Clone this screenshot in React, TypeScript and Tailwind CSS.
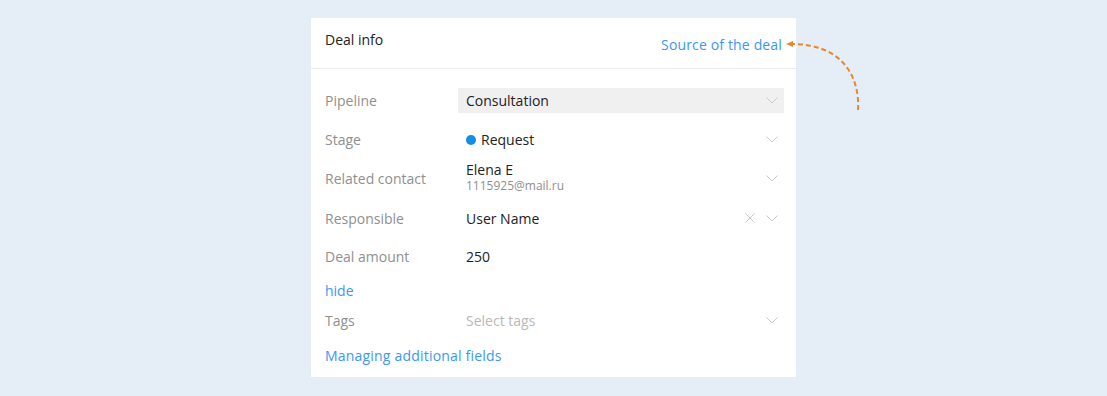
// ── Campos do negócio ──
const Chevron = () => (
  <svg width="12" height="7" viewBox="0 0 12 7" className="shrink-0">
    <path d="M0.5 0.5 L6 6 L11.5 0.5" fill="none" stroke="#c8c8c8" strokeWidth="1" />
  </svg>
)

const Cross = () => (
  <svg width="10" height="10" viewBox="0 0 10 10" className="shrink-0">
    <path d="M0.5 0.5 L9.5 9.5 M9.5 0.5 L0.5 9.5" fill="none" stroke="#c8c8c8" strokeWidth="1" />
  </svg>
)

function Row({ label, children, right, h = 'h-[39px]' }: { label: string; children: React.ReactNode; right?: React.ReactNode; h?: string }) {
  return (
    <div className={`flex items-center ${h}`}>
      <span className="w-[141px] shrink-0 text-[#8f8f8f]">{label}</span>
      <div className="flex-1 flex items-center justify-between pr-[6px]">
        <div>{children}</div>
        {right}
      </div>
    </div>
  )
}

export default function App() {
  return (
    <div
      className="relative w-[1107px] h-[396px] bg-[#e5edf6] text-[14px] text-[#222]"
      style={{ fontFamily: '"Open Sans", "Noto Sans", sans-serif' }}
    >
      <div className="absolute left-[311px] top-[18px] w-[485px] h-[359px] bg-white">
        {/* Cabeçalho */}
        <div className="h-[51px] border-b border-[#ececec] flex justify-between px-[14px]">
          <span className="pt-[11px]">Deal info</span>
          <span className="pt-[16px] text-[#3b97f5] tracking-[0.15px]">Source of the deal</span>
        </div>

        <div className="pl-[14px] pr-[12px] pt-[12px]">
          {/* Pipeline */}
          <div className="flex items-center h-[39px]">
            <span className="w-[133px] shrink-0 text-[#8f8f8f]">Pipeline</span>
            <div className="flex-1 h-[25px] bg-[#f0f0f0] flex items-center justify-between pl-[8px] pr-[6px]">
              <span>Consultation</span>
              <Chevron />
            </div>
          </div>

          <Row label="Stage" right={<Chevron />}>
            <span className="flex items-center gap-[5px]">
              <span className="w-[10px] h-[10px] rounded-full bg-[#138de6]" />
              Request
            </span>
          </Row>

          <Row label="Related contact" right={<Chevron />}>
            <div className="flex flex-col leading-[16px] -mt-[1px]">
              <span>Elena E</span>
              <span className="text-[12px] text-[#8f8f8f]">1115925@mail.ru</span>
            </div>
          </Row>

          <Row
            label="Responsible"
            h="h-[40px]"
            right={
              <span className="flex items-center gap-[11px]">
                <Cross />
                <Chevron />
              </span>
            }
          >
            <span>User Name</span>
          </Row>

          <div className="flex items-center h-[37px]">
            <span className="w-[141px] shrink-0 text-[#8f8f8f]">Deal amount</span>
            <span>250</span>
          </div>

          <div className="h-[30px] flex items-center text-[#3b97f5]">hide</div>

          <Row label="Tags" h="h-[30px]" right={<Chevron />}>
            <span className="text-[#b8b8b8]">Select tags</span>
          </Row>

          <div className="h-[40px] flex items-center text-[#3b97f5] tracking-[0.2px]">Managing additional fields</div>
        </div>
      </div>

      {/* Seta tracejada */}
      <svg className="absolute left-[780px] top-[34px]" width="90" height="80" viewBox="0 0 90 80">
        <path d="M78 76 C 80 40, 60 10, 12 10" fill="none" stroke="#e8872c" strokeWidth="2" strokeDasharray="5 3" />
        <path d="M6 10 L13 7 L13 13 Z" fill="#e8872c" />
      </svg>
    </div>
  )
}
